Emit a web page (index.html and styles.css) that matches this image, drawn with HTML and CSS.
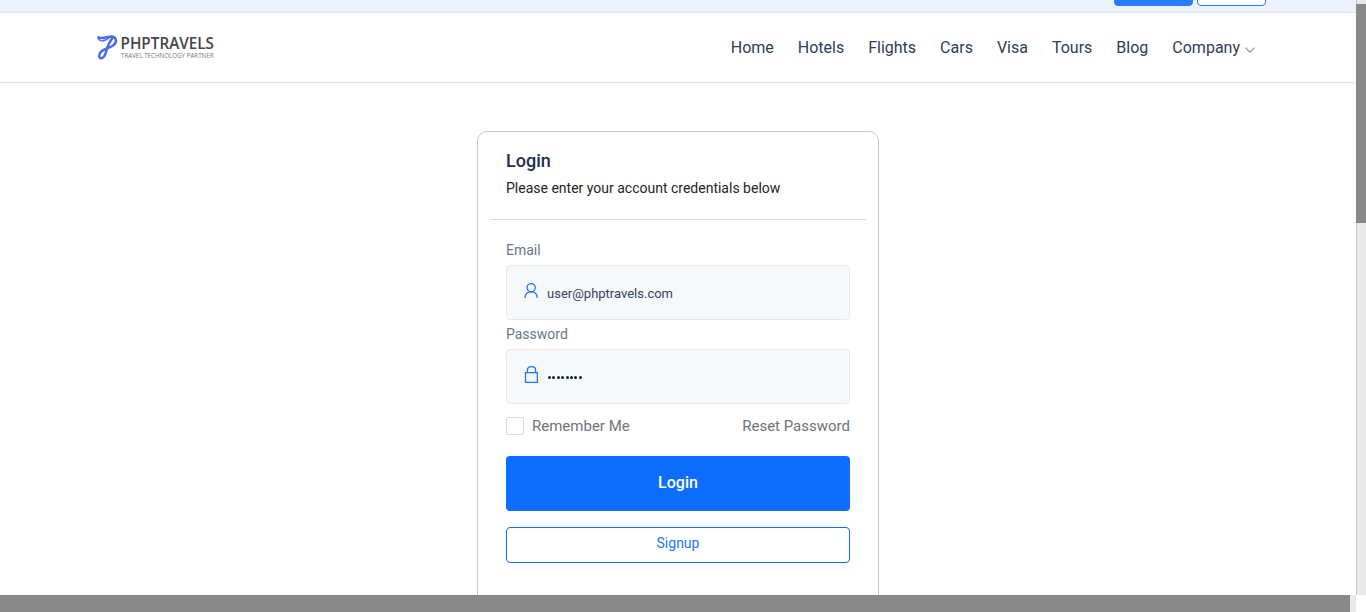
FILE: index.html
```html
<!DOCTYPE html>
<html lang="en">
<head>
<meta charset="utf-8">
<title>Login - PHPTRAVELS</title>
<link rel="stylesheet" href="styles.css">
</head>
<body>
<div class="window">
  <div class="viewport">
    <div class="topbar">
      <span class="top-btn top-btn-solid"></span>
      <span class="top-btn top-btn-outline"></span>
    </div>
    <header class="header">
      <a class="logo" aria-label="PHPTRAVELS">
        <svg width="120" height="28" viewBox="0 0 120 28">
          <g fill="none" stroke="#4a6cf0" stroke-linecap="round" stroke-linejoin="round">
            <path stroke-width="2.500" d="M1.500 3.200C5.500 5.800 10.500 2.200 15 2.400C19.500 3 20.300 8.500 16.500 11.300C13 14 6.500 14.600 3.600 18.200C1.200 21.300 2 24.600 4.600 24.300C7.600 23.600 8.500 20.300 9.300 17C10.200 13.200 11.500 9 15.500 4"/>
            <path stroke-width="1.500" d="M1.500 3.200C1 6.800 5 7.800 8.500 6L13.500 2.800"/>
          </g>
          <text class="logo-name" x="23.500" y="15.300" textLength="93.500" lengthAdjust="spacingAndGlyphs">PHPTRAVELS</text>
          <text class="logo-tag" x="24" y="23.700" textLength="92.500" lengthAdjust="spacingAndGlyphs">TRAVEL TECHNOLOGY PARTNER</text>
        </svg>
      </a>
      <nav class="nav">
        <a>Home</a><a>Hotels</a><a>Flights</a><a>Cars</a><a>Visa</a><a>Tours</a><a>Blog</a>
        <a class="nav-more">Company
          <svg width="10" height="6" viewBox="0 0 10 6" fill="none" stroke="#8b9199" stroke-width="1.100"><path d="M.4.6 5 5.200 9.600.6"/></svg>
        </a>
      </nav>
    </header>
    <main class="main">
      <section class="card">
        <div class="card-head">
          <h1>Login</h1>
          <p>Please enter your account credentials below</p>
        </div>
        <form class="form">
          <label class="label">Email</label>
          <div class="field">
            <svg width="14" height="18" viewBox="0 0 14 18" fill="none" stroke="#1a75ff" stroke-width="1.300"><circle cx="7.200" cy="5.700" r="4.100"/><path d="M1 15.900C1 11.800 3.500 9.800 7.200 9.800S13.200 11.800 13.200 15.900"/></svg>
            <span class="value">user@phptravels.com</span>
          </div>
          <label class="label">Password</label>
          <div class="field">
            <svg width="14" height="18" viewBox="0 0 14 18" fill="none" stroke="#1a75ff" stroke-width="1.300"><path d="M1.500 6.600H13.400V16.400H1.500ZM3.400 6.600V4.200C3.400 1.900 5 .7 7.500 .7S11.600 1.900 11.600 4.200V6.600"/></svg>
            <span class="dots"><i></i><i></i><i></i><i></i><i></i><i></i><i></i><i></i></span>
          </div>
          <div class="options">
            <span class="remember"><span class="check"></span>Remember Me</span>
            <a>Reset Password</a>
          </div>
          <div class="btn btn-login">Login</div>
          <div class="btn btn-signup">Signup</div>
        </form>
      </section>
    </main>
  </div>
  <div class="vscroll"><div class="vthumb"></div></div>
  <div class="hscroll"><div class="hthumb"></div></div>
</div>
</body>
</html>
```
FILE: styles.css
```css
* { box-sizing: border-box; }
body { margin: 0; background: #fff; font-family: Roboto, "Liberation Sans", sans-serif; }
.window {
  display: grid;
  grid-template: 595px 17px / 1356px 10px;
  width: 1366px;
  height: 612px;
  overflow: hidden;
}
.viewport { overflow: hidden; }
.topbar {
  display: flex;
  justify-content: flex-end;
  align-items: flex-end;
  gap: 4px;
  height: 13px;
  padding: 0 90px 6px 0;
  background: #eef2ff;
  border-bottom: 1px solid #dde2ee;
}
.top-btn { height: 30px; border: 1px solid #287dfa; border-radius: 4px; }
.top-btn-solid { width: 79px; background: #287dfa; }
.top-btn-outline { width: 69px; background: #fff; }
.header {
  display: flex;
  justify-content: space-between;
  height: 70px;
  padding: 0 101px 0 97px;
  border-bottom: 1px solid #e8e8e8;
  box-shadow: 0 1px 2px rgba(0, 0, 0, .05);
}
.logo { padding-top: 21px; }
.logo svg { display: block; overflow: visible; }
.logo-name { font: 600 15.800px "Open Sans", sans-serif; fill: #444446; }
.logo-tag { font: 400 7.300px "Open Sans", sans-serif; fill: #777; }
.nav {
  display: flex;
  gap: 24px;
  padding-top: 23px;
  font-size: 16px;
  line-height: 24px;
  color: #2c4059;
}
.nav-more { display: flex; gap: 5px; }
.nav-more svg { margin-top: 11px; }
.main { display: flex; justify-content: center; padding-top: 48px; }
.card {
  width: 402px;
  height: 520px;
  padding: 0 12px;
  border: 1px solid #c8c8c8;
  border-radius: 10px;
}
.card-head { height: 88px; padding: 18px 16px 0; border-bottom: 1px solid #dcdddd; }
.card-head h1 { margin: 0; font-size: 18px; font-weight: 500; line-height: 22px; color: #1a2f49; }
.card-head p { margin: 5px 0 0; font-size: 14px; line-height: 22px; color: #212529; }
.form { padding: 20px 16px 0; }
.label { display: block; height: 25px; font-size: 14px; line-height: 20px; color: #66788f; }
.field {
  display: flex;
  gap: 9px;
  height: 55px;
  margin-bottom: 4px;
  padding: 16px 17px 0;
  background: #f7f8fa;
  border: 1px solid #e4ebf0;
  border-radius: 4px;
}
.value { padding-top: 3px; font-size: 13px; line-height: 18px; color: #34445a; }
.dots { display: flex; gap: 1.400px; padding: 10px 0 0 1px; }
.dots i { width: 3px; height: 3px; border-radius: 50%; background: #0d233e; }
.options {
  display: flex;
  justify-content: space-between;
  padding-top: 7px;
  font-size: 15px;
  line-height: 22px;
  color: #6c757d;
}
.remember { display: flex; align-items: center; gap: 8px; }
.check { width: 18px; height: 18px; border: 1px solid #d8dcdf; border-radius: 2px; background: #fff; }
.btn { border-radius: 4px; text-align: center; }
.btn-login {
  height: 55px;
  margin: 19px 0 16px;
  background: #0d6efd;
  color: #fff;
  font-size: 16px;
  font-weight: 500;
  line-height: 53px;
}
.btn-signup { height: 36px; border: 1px solid #0d6efd; color: #1a75ff; font-size: 14px; line-height: 31px; }
.vscroll { padding-top: 4px; background: #e9e9e9; box-shadow: inset 1px 0 #c8c8c8; }
.vthumb { height: 219px; background: #898989; }
.hscroll { background: #e9e9e9; }
.hthumb { width: 1350px; height: 17px; background: #898989; }
```
